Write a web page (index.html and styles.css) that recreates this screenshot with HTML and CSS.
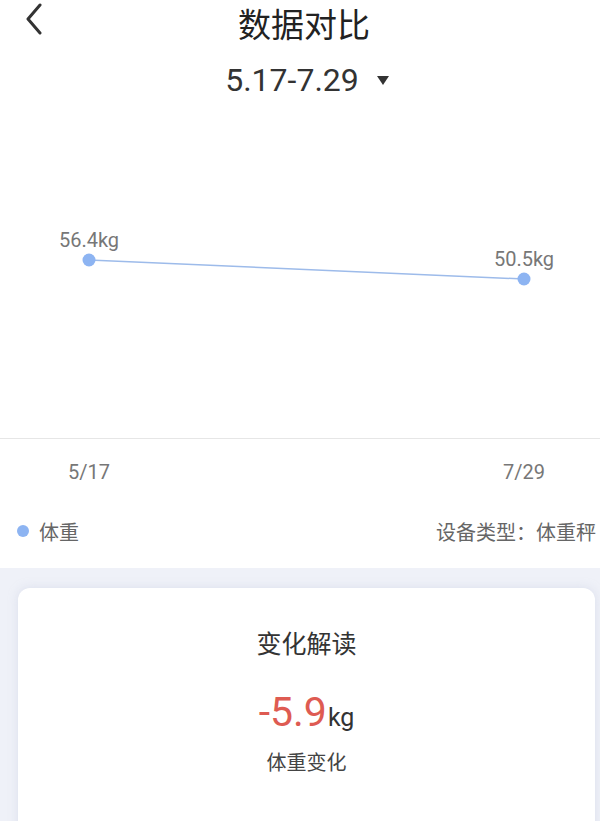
FILE: index.html
```html
<!DOCTYPE html>
<html lang="zh-CN">
<head>
<meta charset="utf-8">
<title>数据对比</title>
<link rel="stylesheet" href="styles.css">
</head>
<body>
<div class="page">
  <header class="header">
    <span class="back">
      <svg width="20" height="32" viewBox="0 0 20 32"><path d="M16 2 L4 16 L16 30" fill="none" stroke="#333" stroke-width="3" stroke-linecap="round" stroke-linejoin="round"/></svg>
    </span>
    <h1 class="title">数据对比</h1>
  </header>
  <div class="range">
    <span class="range-text">5.17-7.29</span>
    <svg class="caret" width="12" height="9" viewBox="0 0 12 9"><path d="M0 0 H12 L6 9 Z" fill="#333"/></svg>
  </div>
  <div class="chart">
    <svg width="600" height="338" viewBox="0 0 600 338">
      <line x1="89" y1="160" x2="524" y2="179" stroke="#9dbbea" stroke-width="1.5"/>
      <circle cx="89" cy="160" r="6.5" fill="#8db4f2"/>
      <circle cx="524" cy="179" r="6.5" fill="#8db4f2"/>
      <text class="pt-label" x="89" y="147" text-anchor="middle">56.4kg</text>
      <text class="pt-label" x="524" y="166" text-anchor="middle">50.5kg</text>
    </svg>
  </div>
  <div class="xaxis">
    <span class="xlabel">5/17</span>
    <span class="xlabel">7/29</span>
  </div>
  <div class="legend">
    <span class="legend-item"><span class="dot"></span>体重</span>
    <span class="device">设备类型：体重秤</span>
  </div>
  <section class="panel">
    <div class="card">
      <h2 class="card-title">变化解读</h2>
      <div class="change"><span class="change-num">-5.9</span><span class="change-unit">kg</span></div>
      <div class="change-label">体重变化</div>
    </div>
  </section>
</div>
</body>
</html>
```

FILE: styles.css
```css
html, body {
  margin: 0;
  padding: 0;
  background: #ffffff;
}
body {
  font-family: Roboto, "Noto Sans CJK SC", sans-serif;
  color: #333;
}
.page {
  width: 600px;
  overflow: hidden;
}
.header {
  position: relative;
  height: 44px;
  display: flex;
  align-items: center;
  justify-content: center;
}
.back {
  position: absolute;
  left: 24px;
  top: 3px;
  display: flex;
}
.title {
  margin: 0;
  font-family: "Noto Sans CJK SC", sans-serif;
  font-weight: 400;
  font-size: 33px;
  line-height: 48px;
  height: 44px;
  color: #222;
  padding-left: 8px;
  margin-top: -2px;
}
.range {
  margin-top: 16px;
  height: 40px;
  display: flex;
  align-items: center;
  justify-content: center;
  padding-left: 14px;
}
.range-text {
  font-size: 32px;
  line-height: 40px;
  color: #333;
}
.caret {
  margin-left: 18px;
  margin-top: 1px;
}
.chart {
  height: 338px;
  border-bottom: 1px solid #e6e6e6;
}
.chart svg {
  display: block;
}
.pt-label {
  font-family: Roboto, sans-serif;
  font-size: 20px;
  fill: #777;
}
.xaxis {
  display: flex;
  justify-content: space-between;
  padding: 0 36px 0 49px;
  height: 66px;
  align-items: center;
}
.xlabel {
  width: 80px;
  text-align: center;
  font-size: 20px;
  color: #777;
}
.legend {
  display: flex;
  justify-content: space-between;
  align-items: center;
  height: 52px;
  padding: 0 4px 11px 17px;
  font-family: "Noto Sans CJK SC", sans-serif;
  font-size: 20px;
  color: #666;
}
.legend-item {
  display: flex;
  align-items: center;
  gap: 10px;
}
.dot {
  width: 12px;
  height: 12px;
  border-radius: 50%;
  background: #8db4f2;
}
.device {
  color: #666;
}
.panel {
  background: #eff1f8;
  padding: 20px 5px 0 18px;
  height: 233px;
}
.card {
  background: #fff;
  border-radius: 12px;
  box-shadow: 0 0 10px rgba(200, 205, 225, 0.5);
  height: 260px;
  display: flex;
  flex-direction: column;
  align-items: center;
  padding-top: 36px;
}
.card-title {
  margin: 0;
  font-family: "Noto Sans CJK SC", sans-serif;
  font-weight: 400;
  font-size: 25px;
  line-height: 36px;
  color: #333;
}
.change {
  margin-top: 30px;
  display: flex;
  align-items: baseline;
  line-height: 44px;
}
.change-num {
  font-size: 41px;
  color: #de5b52;
}
.change-unit {
  font-size: 25px;
  color: #333;
  margin-left: 1px;
}
.change-label {
  margin-top: 8px;
  font-family: "Noto Sans CJK SC", sans-serif;
  font-size: 20px;
  line-height: 28px;
  color: #444;
}
```
